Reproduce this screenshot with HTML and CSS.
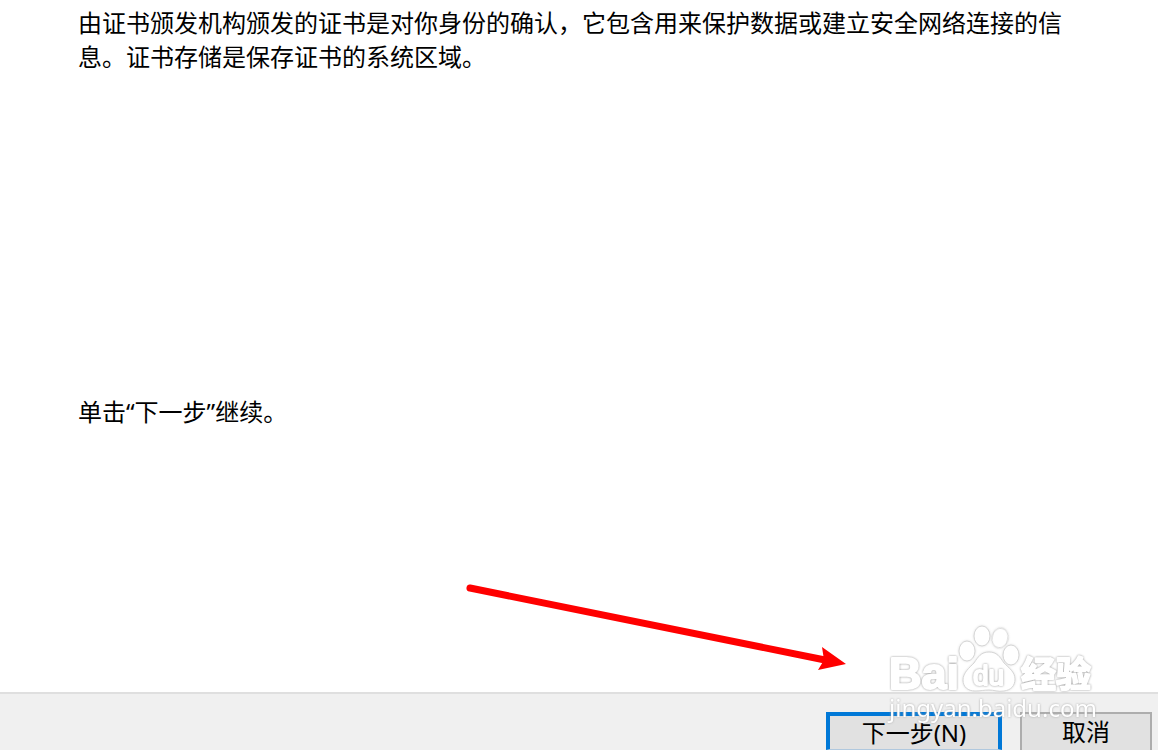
FILE: index.html
```html
<!DOCTYPE html>
<html lang="zh-CN">
	<head>
		<meta charset="utf-8" />
		<title>证书导入向导</title>
		<link rel="stylesheet" href="styles.css">
	</head>
	<body>
		<main class="content">
			<p class="text">由证书颁发机构颁发的证书是对你身份的确认，它包含用来保护数据或建立安全网络连接的信息。证书存储是保存证书的系统区域。</p>
			<p class="text tip">单击“下一步”继续。</p>
		</main>
		<footer class="footer">
			<button class="btn btn-next" type="button">下一步(N)</button>
			<button class="btn" type="button">取消</button>
		</footer>

		<!-- 红色箭头 -->
		<svg class="arrow" width="390" height="100" viewBox="460 575 390 100" aria-hidden="true">
			<path d="M470 588L825 660" stroke="#f00" stroke-width="7" stroke-linecap="round" />
			<path d="M822 647L846 664L818 670L824 660Z" fill="#f00" />
		</svg>

		<!-- 水印 -->
		<svg class="mark" width="220" height="110" viewBox="884 618 220 110" role="img" aria-label="Baidu经验">
			<g class="mark-line">
				<text class="mark-bai" x="889" y="689">Bai</text>
				<ellipse cx="967" cy="651" rx="8" ry="10" />
				<ellipse cx="982" cy="636" rx="8" ry="10" />
				<ellipse cx="1000" cy="638" rx="8" ry="10" transform="rotate(12 1000 638)" />
				<ellipse cx="1011" cy="655" rx="8" ry="10" />
				<path d="M989 652C981 652 978 657 974 663C969 668 963 673 963 680C963 687 968 691 975 691C981 691 984 690 989 690C994 690 998 692 1004 691C1011 690 1015 686 1015 679C1015 672 1009 668 1004 663C1000 657 997 652 989 652Z" />
				<text class="mark-du" x="973" y="685">du</text>
				<text class="mark-cn" x="1021" y="687">经验</text>
			</g>
			<text class="mark-url" x="889" y="717">jingyan.baidu.com</text>
		</svg>
	</body>
</html>
```
FILE: styles.css
```css
* {
	margin: 0;
	padding: 0;
	box-sizing: border-box;
}

body {
	display: flex;
	flex-direction: column;
	position: relative;
	min-height: 100vh;
	background-color: #fff;
	color: #000;
	font-family: "Noto Sans", "Noto Sans CJK SC", sans-serif;
	font-size: 24px;
	line-height: 34px;
}

.content {
	flex: 1;
	padding: 6px 78px 0;
}

.tip {
	margin-top: 321px;
}

.footer {
	display: flex;
	justify-content: flex-end;
	gap: 18px;
	padding: 18px 6px 0;
	border-top: 2px solid #dfdfdf;
	background-color: #f0f0f0;
}

.btn {
	width: 132px;
	height: 38px;
	border: 2px solid #adadad;
	border-bottom: 0;
	background-color: #e1e1e1;
	color: #000;
	font: inherit;
}

.btn-next {
	width: 176px;
	border: 4px solid #0078d7;
	border-bottom: 1px solid #b0c8de;
}

.arrow {
	position: absolute;
	right: 308px;
	bottom: 75px;
	fill: none;
	pointer-events: none;
}

.mark {
	position: absolute;
	right: 54px;
	bottom: 22px;
	pointer-events: none;
}

.mark-line {
	fill: #fff;
	stroke: #d6d6d6;
	stroke-width: 1px;
	stroke-linejoin: round;
}

/* 白色粗字，外面一圈浅灰描边 */
.mark-line text {
	stroke: #fff;
	stroke-width: 2px;
	filter: drop-shadow(0 0 1px #999);
}

.mark-line ellipse,
.mark-line path {
	filter: drop-shadow(0 0 1px #ddd);
}

.mark-bai {
	font: bold 45px/1 "Liberation Sans", sans-serif;
}

.mark-du {
	font: 28px/1 "Liberation Sans", sans-serif;
}

.mark-cn {
	font: bold 35px/1 "Noto Sans CJK SC", sans-serif;
}

.mark-url {
	fill: #fff;
	font: 24px/1 "Noto Sans", sans-serif;
	filter: drop-shadow(0 0 1px #aaa);
}
```
